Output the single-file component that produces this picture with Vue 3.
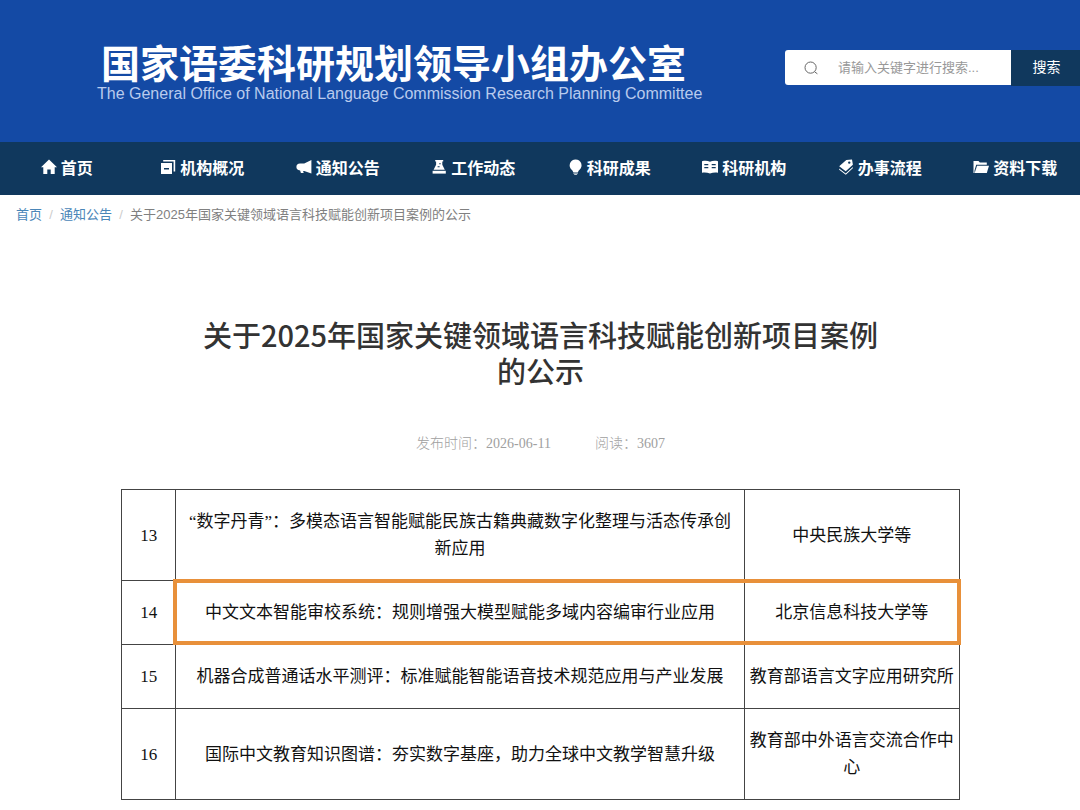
<script setup>
import { ref } from 'vue'

const keyword = ref('')

const navItems = [
  { icon: 'home', label: '首页' },
  { icon: 'windows', label: '机构概况' },
  { icon: 'horn', label: '通知公告' },
  { icon: 'flask', label: '工作动态' },
  { icon: 'bulb', label: '科研成果' },
  { icon: 'book', label: '科研机构' },
  { icon: 'tags', label: '办事流程' },
  { icon: 'folder', label: '资料下载' },
]

const rows = [
  { no: 13, name: '“数字丹青”：多模态语言智能赋能民族古籍典藏数字化整理与活态传承创新应用', org: '中央民族大学等' },
  { no: 14, name: '中文文本智能审校系统：规则增强大模型赋能多域内容编审行业应用', org: '北京信息科技大学等', marked: true },
  { no: 15, name: '机器合成普通话水平测评：标准赋能智能语音技术规范应用与产业发展', org: '教育部语言文字应用研究所' },
  { no: 16, name: '国际中文教育知识图谱：夯实数字基座，助力全球中文教学智慧升级', org: '教育部中外语言交流合作中心' },
]
</script>

<template>
  <div class="page">
    <header class="banner">
      <div class="brand">
        <div class="brand-cn">国家语委科研规划领导小组办公室</div>
        <div class="brand-en">The General Office of National Language Commission Research Planning Committee</div>
      </div>
      <form class="search" @submit.prevent>
        <label class="field">
          <svg class="lens" viewBox="0 0 14 14" aria-hidden="true">
            <circle cx="6.6" cy="6.6" r="5.6" />
            <path d="M10.6 10.8 13.4 12.8" />
          </svg>
          <input v-model="keyword" type="text" aria-label="搜索关键字" placeholder="请输入关键字进行搜索..." />
        </label>
        <button type="submit">搜索</button>
      </form>
    </header>

    <nav class="nav">
      <ul>
        <li v-for="item in navItems" :key="item.label">
          <a href="#">
            <svg class="icon" viewBox="0 0 16 16" aria-hidden="true">
              <path v-if="item.icon === 'home'" d="M8 .6 0 8.2h2.3V15h4V10.6h3.4V15h4V8.2H16z" />
              <template v-else-if="item.icon === 'windows'">
                <path fill-rule="evenodd" d="M1 4h11v11H1zM4 9v1.4h5V9z" />
                <path d="M3.2 1h12v11.6h-1.6V2.6H3.2z" />
              </template>
              <path v-else-if="item.icon === 'horn'" d="M15.4 1v13.6L8.2 11.9H7.1l.6 2H4.9l-.8-2.4C1.4 11 .4 9.6.4 7.9S1.6 4.8 4 4.6h4.2z" />
              <template v-else-if="item.icon === 'flask'">
                <path fill-rule="evenodd" d="M4.2 1h8v1.6h-.9v3.1l2.5 5.1H2.6l2.5-5.1V2.6h-.9zM8.2 4.2v1h1.5v-1zM6.6 7.2v1h2v-1z" />
                <path d="M1.6 11.8h13.2v2.8H1.6z" />
              </template>
              <template v-else-if="item.icon === 'bulb'">
                <path d="M8.6.4a5.9 5.9 0 0 0-3.7 10.5c.8.7 1 1.2 1.2 2h5c.2-.8.4-1.3 1.2-2A5.9 5.9 0 0 0 8.6.4z" />
                <path d="M6.3 13.6h4.6v.8H6.3zM6.8 15h3.6l-.8.8h-2z" />
              </template>
              <path v-else-if="item.icon === 'book'" fill-rule="evenodd" d="M0 2.2c3-.7 5.8-.6 8 .6 2.2-1.2 5-1.3 8-.6v11.5c-3-.3-5.4-.2-8 .8-2.6-1-5-1.1-8-.8zM2.3 5v1.2h4V5zm0 3v1.2h4V8zM9.7 5v1.2h4V5zm0 3v1.2h4V8z" />
              <template v-else-if="item.icon === 'tags'">
                <path fill-rule="evenodd" d="M8.3 1 14 .4l.9 5.4-7.2 6.5L1.2 7.2zM11.2 2.4a1.2 1.2 0 1 0 .1 2.4 1.2 1.2 0 0 0-.1-2.4z" />
                <path d="m1.2 9.5 6.5 5 7.1-6.6v1.3l-7 6.6-6.6-5z" />
              </template>
              <template v-else>
                <path d="M.5 2h5l1.3 1.6h7v2.2H3.2L1.5 11.6V14H.5z" />
                <path d="M4 6.7h12L13.8 14H1.7z" />
              </template>
            </svg>
            <span>{{ item.label }}</span>
          </a>
        </li>
      </ul>
    </nav>

    <nav class="crumbs" aria-label="面包屑">
      <a href="#">首页</a>
      <i>/</i>
      <a href="#">通知公告</a>
      <i>/</i>
      <span>关于2025年国家关键领域语言科技赋能创新项目案例的公示</span>
    </nav>

    <main class="article">
      <h1>关于2025年国家关键领域语言科技赋能创新项目案例的公示</h1>
      <p class="meta">
        <span>发布时间：2026-06-11</span>
        <span>阅读：3607</span>
      </p>
      <table>
        <colgroup>
          <col class="col-no" />
          <col class="col-name" />
          <col />
        </colgroup>
        <tbody>
          <tr v-for="row in rows" :key="row.no" :class="{ marked: row.marked }">
            <td>{{ row.no }}</td>
            <td class="name">{{ row.name }}</td>
            <td class="org">{{ row.org }}</td>
          </tr>
        </tbody>
      </table>
    </main>
  </div>
</template>

<style>
body {
  margin: 0;
  background: #fff;
}
</style>

<style scoped>
.page {
  font-family: "Liberation Sans", "Noto Sans CJK SC", sans-serif;
  color: #333;
  overflow: hidden;
}

a {
  text-decoration: none;
}

.banner {
  display: flex;
  justify-content: space-between;
  align-items: flex-start;
  box-sizing: border-box;
  min-height: 142px;
  padding: 44px 0 32px 97px;
  background: #144aa5;
}

.brand {
  white-space: nowrap;
}

.brand-cn {
  padding: 1px 0 0 4px;
  font-size: 39px;
  line-height: 40px;
  font-weight: 700;
  color: #fff;
}

.brand-en {
  font-size: 16px;
  line-height: 18px;
  color: #b9cbed;
}

.search {
  display: flex;
  margin-top: 6px;
}

.field {
  display: flex;
  align-items: center;
  gap: 20px;
  box-sizing: border-box;
  width: 226px;
  height: 35px;
  padding: 0 8px 0 19px;
  background: #fff;
  border-radius: 3px 0 0 3px;
}

.lens {
  flex: none;
  width: 14px;
  height: 14px;
  fill: none;
  stroke: #666;
  stroke-width: 1;
}

.field input {
  flex: 1;
  min-width: 0;
  padding: 0;
  border: 0;
  outline: 0;
  background: transparent;
  font: 13px/20px "Liberation Sans", "Noto Sans CJK SC", sans-serif;
  color: #333;
}

.field input::placeholder {
  color: #999;
}

.search button {
  width: 69px;
  height: 36px;
  padding: 0 0 2px 2px;
  border: 0;
  background: #10385d;
  font: 14px/20px "Liberation Sans", "Noto Sans CJK SC", sans-serif;
  color: #fff;
}

.nav {
  background: #10385d;
}

.nav ul {
  display: grid;
  grid-template-columns: repeat(8, 1fr);
  margin: 0 -3px 0 -1px;
  padding: 0;
  list-style: none;
}

.nav a {
  display: flex;
  justify-content: center;
  align-items: center;
  gap: 4px;
  height: 50px;
  padding-bottom: 3px;
  font-size: 16px;
  font-weight: 700;
  color: #fff;
  white-space: nowrap;
}

.icon {
  width: 16px;
  height: 16px;
  fill: #fff;
}

.crumbs {
  display: flex;
  padding: 10px 16px;
  font-size: 13px;
  line-height: 20px;
  color: #808080;
}

.crumbs a {
  color: #4a86b8;
}

.crumbs i {
  width: 18px;
  text-align: center;
  font-style: normal;
  color: #ccc;
}

.article {
  padding: 81px 120px 12px 121px;
}

h1 {
  max-width: 690px;
  margin: 0 auto;
  font-family: "Noto Sans CJK SC", sans-serif;
  font-size: 29px;
  line-height: 36px;
  font-weight: 500;
  text-align: center;
  color: #333;
}

.meta {
  display: flex;
  justify-content: center;
  gap: 44px;
  margin: 46px 0 35px;
  font-family: "Liberation Serif", "Noto Sans CJK SC", serif;
  font-size: 14px;
  line-height: 20px;
  font-weight: 300;
  color: #a0a0a0;
}

table {
  width: 100%;
  border-collapse: collapse;
  table-layout: fixed;
  font-family: "Liberation Serif", "Noto Sans CJK SC", serif;
  font-size: 17px;
  line-height: 27px;
  text-align: center;
  color: #111;
}

.col-no {
  width: 6.5%;
}

.col-name {
  width: 67.8%;
}

td {
  padding: 18px 5px;
  border: 1px solid #444;
}

.name {
  padding: 18px 8px;
}

.marked td {
  position: relative;
}

.marked .name::after,
.marked .org::after {
  content: "";
  position: absolute;
  inset: -2px 0 -1px -3px;
  border: 4px solid #e8903a;
  border-right: 0;
}

.marked .org::after {
  inset: -2px -2px -1px -1px;
  border-right: 4px solid #e8903a;
  border-left: 0;
}
</style>
